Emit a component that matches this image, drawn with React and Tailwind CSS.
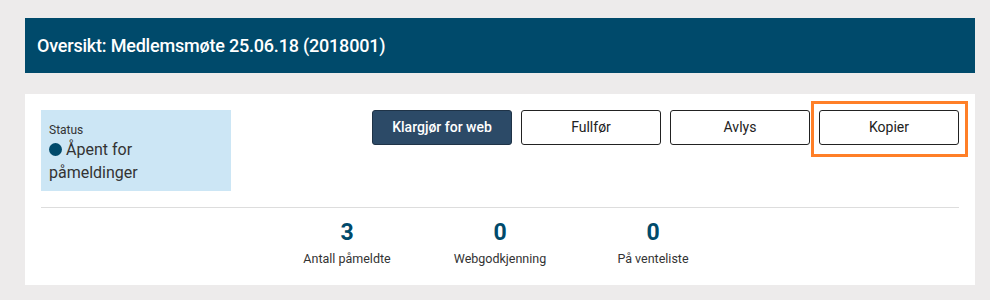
import React from 'react';

const stats = [
  { value: '3', label: 'Antall påmeldte' },
  { value: '0', label: 'Webgodkjenning' },
  { value: '0', label: 'På venteliste' },
];

const App = () => {
  return (
    <div className="min-h-[300px] bg-[#edebeb] pl-[25px] pr-[15px] pt-[18px] pb-[15px] font-['Roboto',sans-serif]">
      <div className="flex h-[55px] items-center bg-[#004a6b] px-3">
        <h1 className="text-[18px] font-medium tracking-[-0.2px] text-white">
          Oversikt: Medlemsmøte 25.06.18 (2018001)
        </h1>
      </div>

      <div className="mt-[21px] bg-white px-4 pt-4 pb-[18px]">
        <div className="flex items-start justify-between">
          <div className="h-[81px] w-[190px] bg-[#cce6f5] px-2 pt-[12px] text-[#333]">
            <div className="text-[12px] leading-[16px]">Status</div>
            <div className="text-[16px] leading-[23px]">
              <span className="mr-1 inline-block h-[13px] w-[13px] rounded-full bg-[#004a6b] align-[-1px]" />
              Åpent for påmeldinger
            </div>
          </div>

          <div className="flex gap-[9px]">
            <button className="h-[35px] w-[140px] rounded-[3px] border border-[#1f3347] bg-[#2c4a67] text-[14px] font-medium text-white">
              Klargjør for web
            </button>
            <button className="h-[35px] w-[140px] rounded-[3px] border border-[#222] bg-white text-[14px] text-[#222]">
              Fullfør
            </button>
            <button className="h-[35px] w-[140px] rounded-[3px] border border-[#222] bg-white text-[14px] text-[#222]">
              Avlys
            </button>
            <div className="relative">
              <button className="h-[35px] w-[140px] rounded-[3px] border border-[#222] bg-white text-[14px] text-[#222]">
                Kopier
              </button>
              <div className="pointer-events-none absolute -top-[9px] -right-[9px] -bottom-[12px] -left-[8px] border-[3px] border-[#ff7f27]" />
            </div>
          </div>
        </div>

        <div className="mt-4 border-t border-[#dddddd]" />

        <div className="mt-[12px] flex justify-center">
          {stats.map((s, i) => (
            <div key={i} className="flex w-[153px] flex-col items-center">
              <div className="text-[23px] font-bold leading-[26px] text-[#004a6b]">{s.value}</div>
              <div className="mt-[5px] text-[12.5px] leading-[16px] text-[#333]">{s.label}</div>
            </div>
          ))}
        </div>
      </div>
    </div>
  );
};

export default App;
